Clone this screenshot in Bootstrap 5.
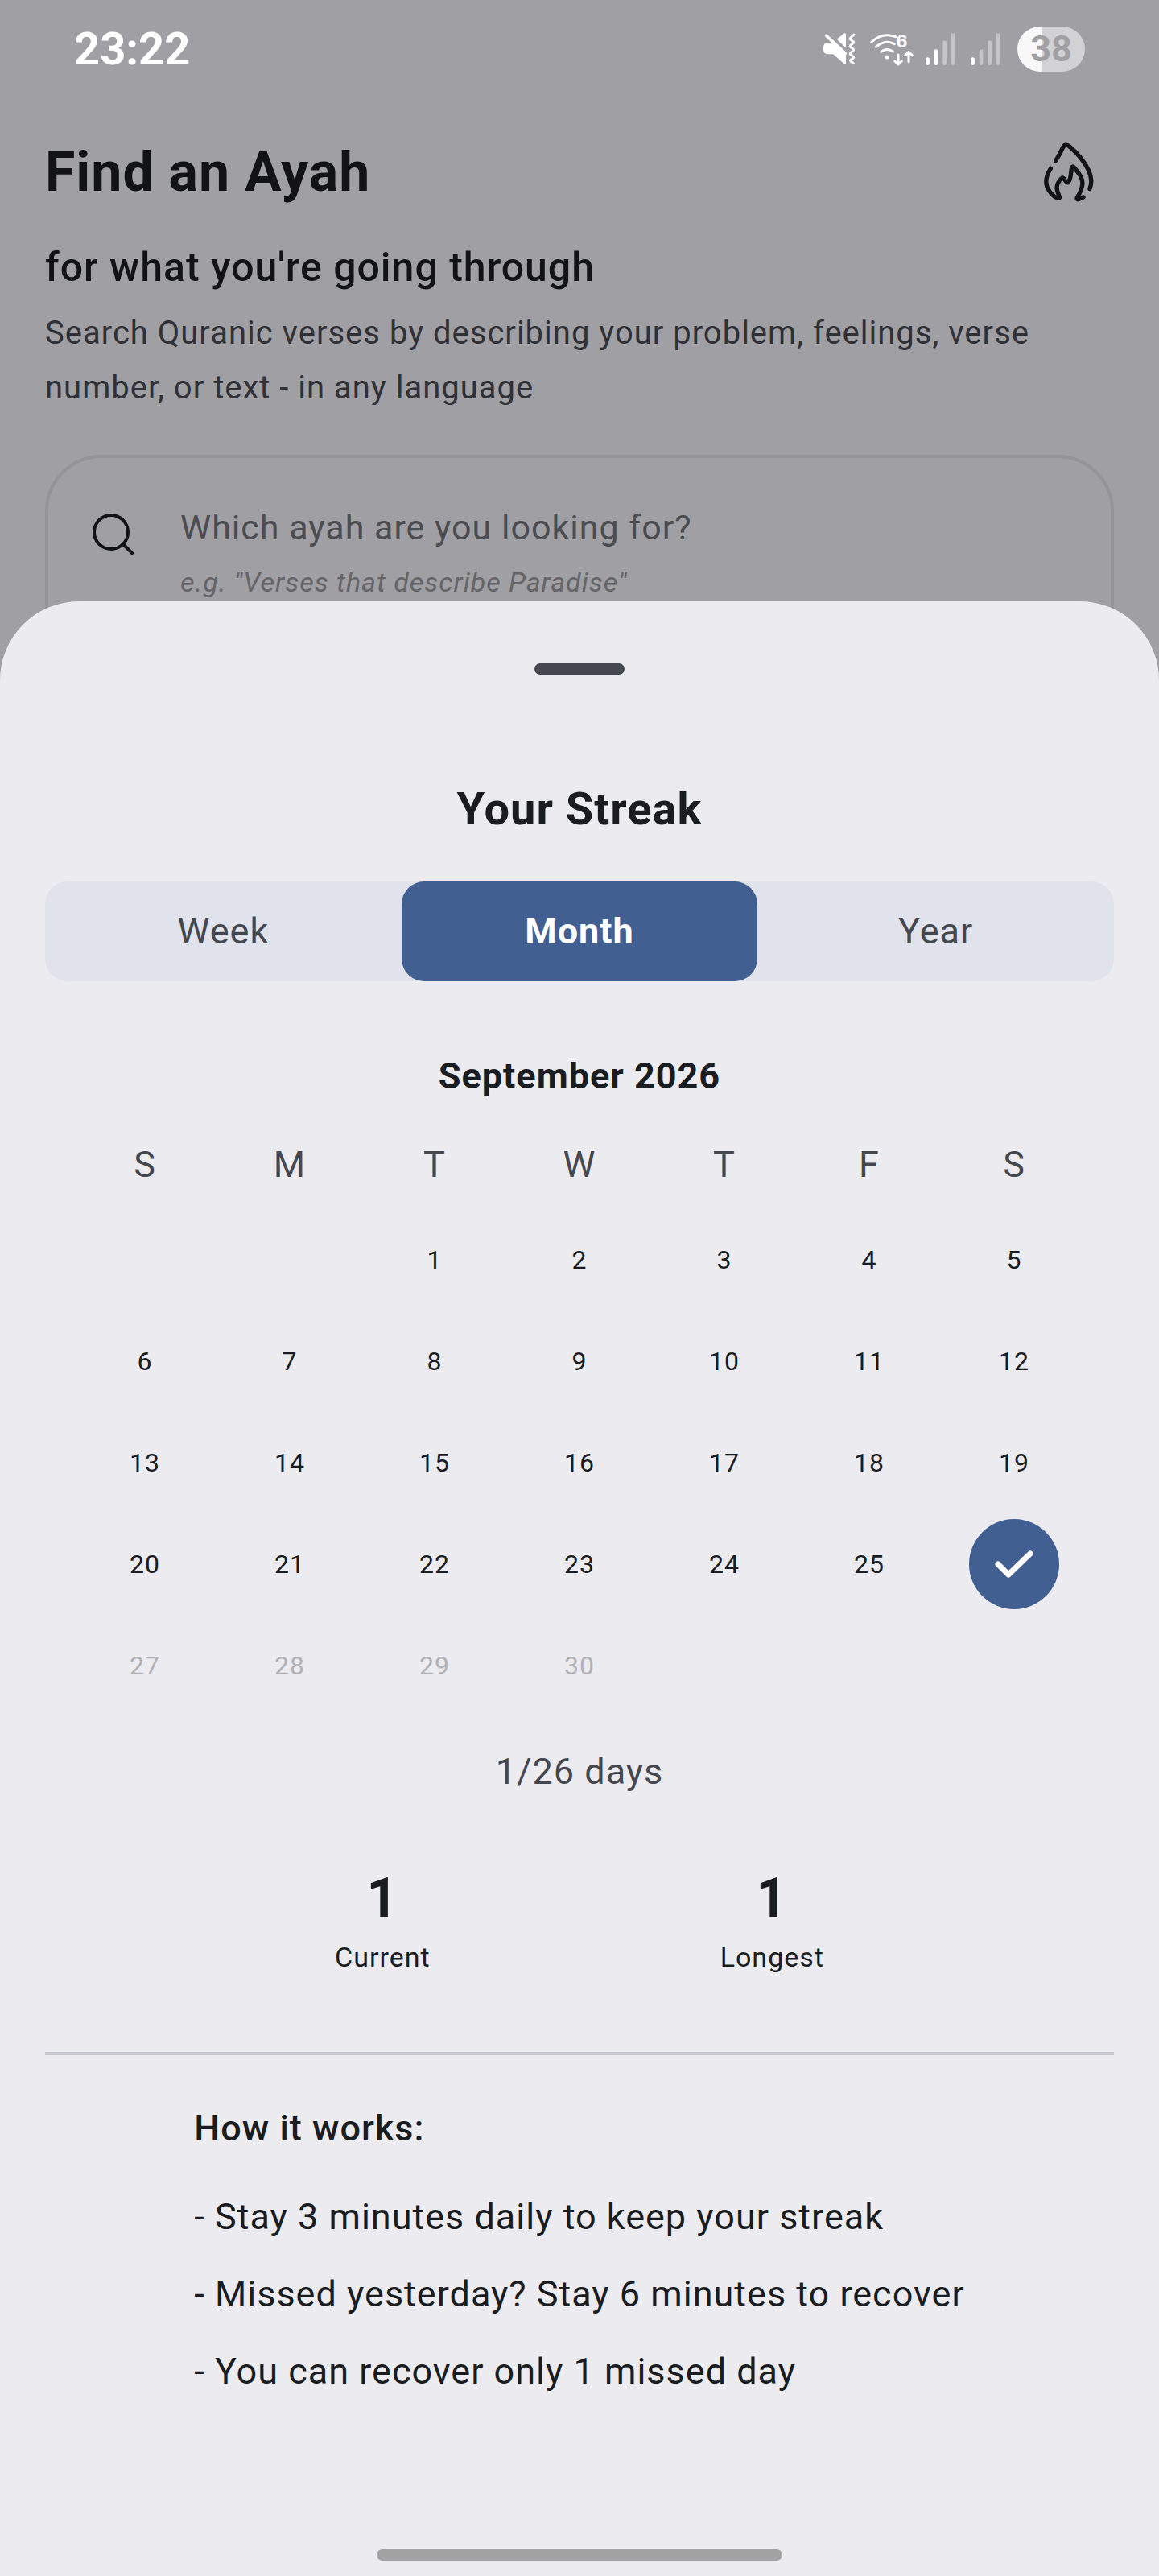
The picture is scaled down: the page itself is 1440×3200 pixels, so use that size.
<!DOCTYPE html>
<html lang="en">
<head>
<meta charset="utf-8">
<meta name="viewport" content="width=device-width, initial-scale=1">
<title>Your Streak</title>
<link href="https://cdn.jsdelivr.net/npm/bootstrap@5.3.0/dist/css/bootstrap.min.css" rel="stylesheet">
<style>
  :root { --scrim: #a09fa4; --sheet: #ecebf0; --ink: #191c20; --muted-ink: #44474e; --brand: #415f91; --gutter: 56px; }
  body { font-family: Roboto, "Noto Sans", sans-serif; letter-spacing: 1px; background: var(--scrim); color: var(--ink); font-size: 45px; line-height: 56px; }
  h1, h2, h3, p { margin: 0; line-height: inherit; font-size: inherit; }

  .status-bar { height: 122px; padding: 0 92px; letter-spacing: 0; color: #fff; }
  .status-icons { gap: 12px; }
  .clock { font-size: 56px; font-weight: 700; }
  .battery { width: 84px; height: 56px; border-radius: 28px; margin-left: 4px; background: linear-gradient(90deg, #f8f8f8 37%, #d2d1d4 37%); color: var(--scrim); font-size: 45px; font-weight: 700; }

  .page-head { padding: 52px var(--gutter) 0; color: #111316; }
  .page-title { font-size: 68px; line-height: 80px; font-weight: 700; }
  .streak-btn { width: 112px; }
  .page-sub { font-size: 50px; line-height: 60px; font-weight: 500; margin-top: 48px; }
  .page-text { font-size: 40px; line-height: 68px; margin-top: 18px; color: #2f3136; }
  .search-box { border: 4px solid #949398; border-radius: 70px; margin-top: 49px; padding: 58px 54px 97px; gap: 58px; }
  .search-box input { display: block; width: 100%; border: 0; padding: 0; background: transparent; outline: 0; font-size: 43px; line-height: 56px; height: 56px; letter-spacing: inherit; }
  .search-box input::placeholder { color: #4b4c50; opacity: 1; }
  .search-hint { font-size: 34px; line-height: 56px; margin-top: 12px; font-style: italic; color: #656568; }

  .sheet { margin-top: -105px; padding: 77px var(--gutter) 19px; border-radius: 98px 98px 0 0; background: var(--sheet); z-index: 1; }
  .grab { width: 112px; height: 14px; border-radius: 7px; background: var(--muted-ink); }
  .sheet-title { font-size: 56px; line-height: 64px; font-weight: 700; margin-top: 135px; }
  .segments { height: 124px; border-radius: 28px; background: #e0e2ec; margin-top: 58px; }
  .segments button { border: 0; border-radius: 28px; background: transparent; color: var(--muted-ink); letter-spacing: inherit; }
  .segments button.active { background: var(--brand); color: #fff; font-weight: 700; }
  .month-name { margin-top: 90px; font-weight: 700; }
  .calendar-wrap { margin-top: 54px; padding: 0 34px; }
  .calendar { width: 100%; table-layout: fixed; text-align: center; }
  .calendar th { font-weight: 400; color: var(--muted-ink); padding: 0 0 27px; }
  .calendar td { height: 126px; padding: 0; font-size: 32px; line-height: 40px; vertical-align: middle; }
  .calendar .upcoming { color: #b1b1b5; }
  .done-day { width: 112px; height: 112px; background: var(--brand); }
  .days-count { margin-top: 41px; color: var(--muted-ink); }
  .stats { margin-top: 89px; }
  .stat-value { font-size: 68px; line-height: 80px; font-weight: 700; }
  .stat-label { font-size: 34px; line-height: 48px; margin-top: 9px; }
  .divider { border-top: 4px solid #c4c6d0; opacity: 1; margin: 94px 0 63px; }
  .rules-title { font-weight: 500; }
  .rules { margin: 54px 0 0; gap: 40px; }
  .home-bar { width: 504px; max-width: 60%; height: 14px; border-radius: 7px; background: #a3a3a4; }
</style>
</head>
<body class="d-flex flex-column min-vh-100">

<div class="status-bar d-flex align-items-center justify-content-between">
  <span class="clock">23:22</span>
  <div class="status-icons d-flex align-items-center">
    <!-- muted, vibrate -->
    <svg class="me-1" width="42" height="42" viewBox="129 119 126 126" fill="#fff" aria-hidden="true">
      <path d="M182 145l28-22q6-2 6 4v51z"/>
      <path d="M150 158h22l44 36v43q0 4-5 1l-42-37h-19q-18 0-18-18v-7q0-18 18-18z"/>
      <path d="M152 125l68 62" stroke="#a09fa4" stroke-width="8"/>
      <path d="M143 132l71 66" stroke="#fff" stroke-width="11" stroke-linecap="round"/>
      <path d="M246 128L233 140Q230 143 233 146L243 154Q246 157 243 160L233 168Q230 171 233 174L243 182Q246 185 243 188L233 196Q230 199 233 202L243 210Q246 213 243 216L234 222Q231 225 234 227L244 235" fill="none" stroke="#fff" stroke-width="9" stroke-linecap="round" stroke-linejoin="round"/>
    </svg>
    <!-- wifi 6 with traffic arrows -->
    <svg width="56" height="56" viewBox="308 98 168 168" fill="none" stroke="#fff" stroke-width="9" stroke-linecap="round" stroke-linejoin="round" aria-hidden="true">
      <path d="M316 156q40-38 90-20M333 174q33-30 69-11M352 192q22-17 44-1"/>
      <circle cx="374" cy="212" r="7.500" fill="#fff" stroke="none"/>
      <path d="M416 203v36M403 227l13 12 13-12M455 229v-36M442 205l13-12 13 12"/>
      <text x="408" y="177" fill="#fff" stroke="none" font-family="Inter, sans-serif" font-size="66" font-weight="700">6</text>
    </svg>
    <svg width="44" height="42" viewBox="506 119 132 126" stroke="#fff" stroke-width="14" stroke-linecap="round" aria-hidden="true">
      <path d="M520 220v15M551 190v45"/><path stroke="#c5c5c8" d="M583 157v78M614 130v105"/>
    </svg>
    <svg width="44" height="42" viewBox="506 119 132 126" stroke="#fff" stroke-width="14" stroke-linecap="round" aria-hidden="true">
      <path d="M520 220v15"/><path stroke="#c5c5c8" d="M551 190v45M583 157v78M614 130v105"/>
    </svg>
    <span class="battery d-flex align-items-center justify-content-center">38</span>
  </div>
</div>

<header class="page-head">
  <div class="d-flex align-items-center justify-content-between">
    <h1 class="page-title">Find an Ayah</h1>
    <button type="button" class="streak-btn btn p-0 border-0 d-flex justify-content-center" aria-label="Streak">
      <svg width="64" height="76" viewBox="948 530 192 228" fill="none" stroke="#111316" stroke-width="16" stroke-linecap="round" stroke-linejoin="round" aria-hidden="true">
        <path d="M995 601Q1010 578 1021 553Q1030 535 1045 547C1078 574 1104 608 1119 640C1130 665 1130 685 1122 706"/>
        <path d="M976 630C955 663 955 690 970 712C980 727 992 737 1003 741Q1013 742 1008 732C998 712 995 698 1004 683Q1010 672 1017 667Q1022 662 1027 670L1034 679Q1041 687 1046 675C1052 660 1052 645 1054 630Q1057 617 1065 628C1082 648 1098 668 1094 692C1092 710 1083 725 1075 738Q1072 748 1082 744L1098 737"/>
      </svg>
    </button>
  </div>
  <h2 class="page-sub">for what you're going through</h2>
  <p class="page-text">Search Quranic verses by describing your problem, feelings, verse number, or text - in any language</p>
  <div class="search-box d-flex align-items-start">
    <svg class="flex-shrink-0" width="52" height="72" viewBox="0 0 52 72" fill="none" stroke="#111316" stroke-width="4" stroke-linecap="round" aria-hidden="true">
      <circle cx="24" cy="34" r="21"/><path d="M39 49l11 11"/>
    </svg>
    <div class="flex-grow-1">
      <input type="text" id="ayah" aria-label="Search for an ayah" aria-describedby="ayah-hint" placeholder="Which ayah are you looking for?">
      <div id="ayah-hint" class="search-hint">e.g. "Verses that describe Paradise"</div>
    </div>
  </div>
</header>

<main class="sheet position-relative flex-grow-1 d-flex flex-column">
  <div class="grab mx-auto"></div>
  <h2 class="sheet-title text-center">Your Streak</h2>

  <div class="segments d-flex" role="group" aria-label="Period">
    <button type="button" class="flex-fill w-100">Week</button>
    <button type="button" class="flex-fill w-100 active" aria-pressed="true">Month</button>
    <button type="button" class="flex-fill w-100">Year</button>
  </div>

  <h3 class="month-name text-center" id="month">September 2026</h3>
  <div class="calendar-wrap">
    <table class="calendar" aria-labelledby="month">
      <thead>
        <tr><th scope="col">S</th><th scope="col">M</th><th scope="col">T</th><th scope="col">W</th><th scope="col">T</th><th scope="col">F</th><th scope="col">S</th></tr>
      </thead>
      <tbody>
        <tr><td></td><td></td><td>1</td><td>2</td><td>3</td><td>4</td><td>5</td></tr>
        <tr><td>6</td><td>7</td><td>8</td><td>9</td><td>10</td><td>11</td><td>12</td></tr>
        <tr><td>13</td><td>14</td><td>15</td><td>16</td><td>17</td><td>18</td><td>19</td></tr>
        <tr><td>20</td><td>21</td><td>22</td><td>23</td><td>24</td><td>25</td>
          <td><span class="done-day rounded-circle d-flex align-items-center justify-content-center mx-auto">
            <svg width="48" height="36" viewBox="0 0 48 36" fill="none" stroke="#fff" stroke-width="7" stroke-linecap="round" stroke-linejoin="round" role="img" aria-label="26, completed"><path d="M4 18l13 13L44 5"/></svg>
          </span></td></tr>
        <tr class="upcoming"><td>27</td><td>28</td><td>29</td><td>30</td><td></td><td></td><td></td></tr>
      </tbody>
    </table>
  </div>

  <p class="days-count text-center">1/26 days</p>

  <div class="stats d-flex justify-content-evenly text-center">
    <div><div class="stat-value">1</div><div class="stat-label">Current</div></div>
    <div><div class="stat-value">1</div><div class="stat-label">Longest</div></div>
  </div>

  <hr class="divider">

  <section class="mx-auto">
    <h3 class="rules-title">How it works:</h3>
    <div class="rules d-flex flex-column">
      <p>- Stay 3 minutes daily to keep your streak</p>
      <p>- Missed yesterday? Stay 6 minutes to recover</p>
      <p>- You can recover only 1 missed day</p>
    </div>
  </section>

  <div class="home-bar mx-auto mt-auto"></div>
</main>

<script src="https://cdn.jsdelivr.net/npm/bootstrap@5.3.0/dist/js/bootstrap.bundle.min.js"></script>
</body>
</html>
